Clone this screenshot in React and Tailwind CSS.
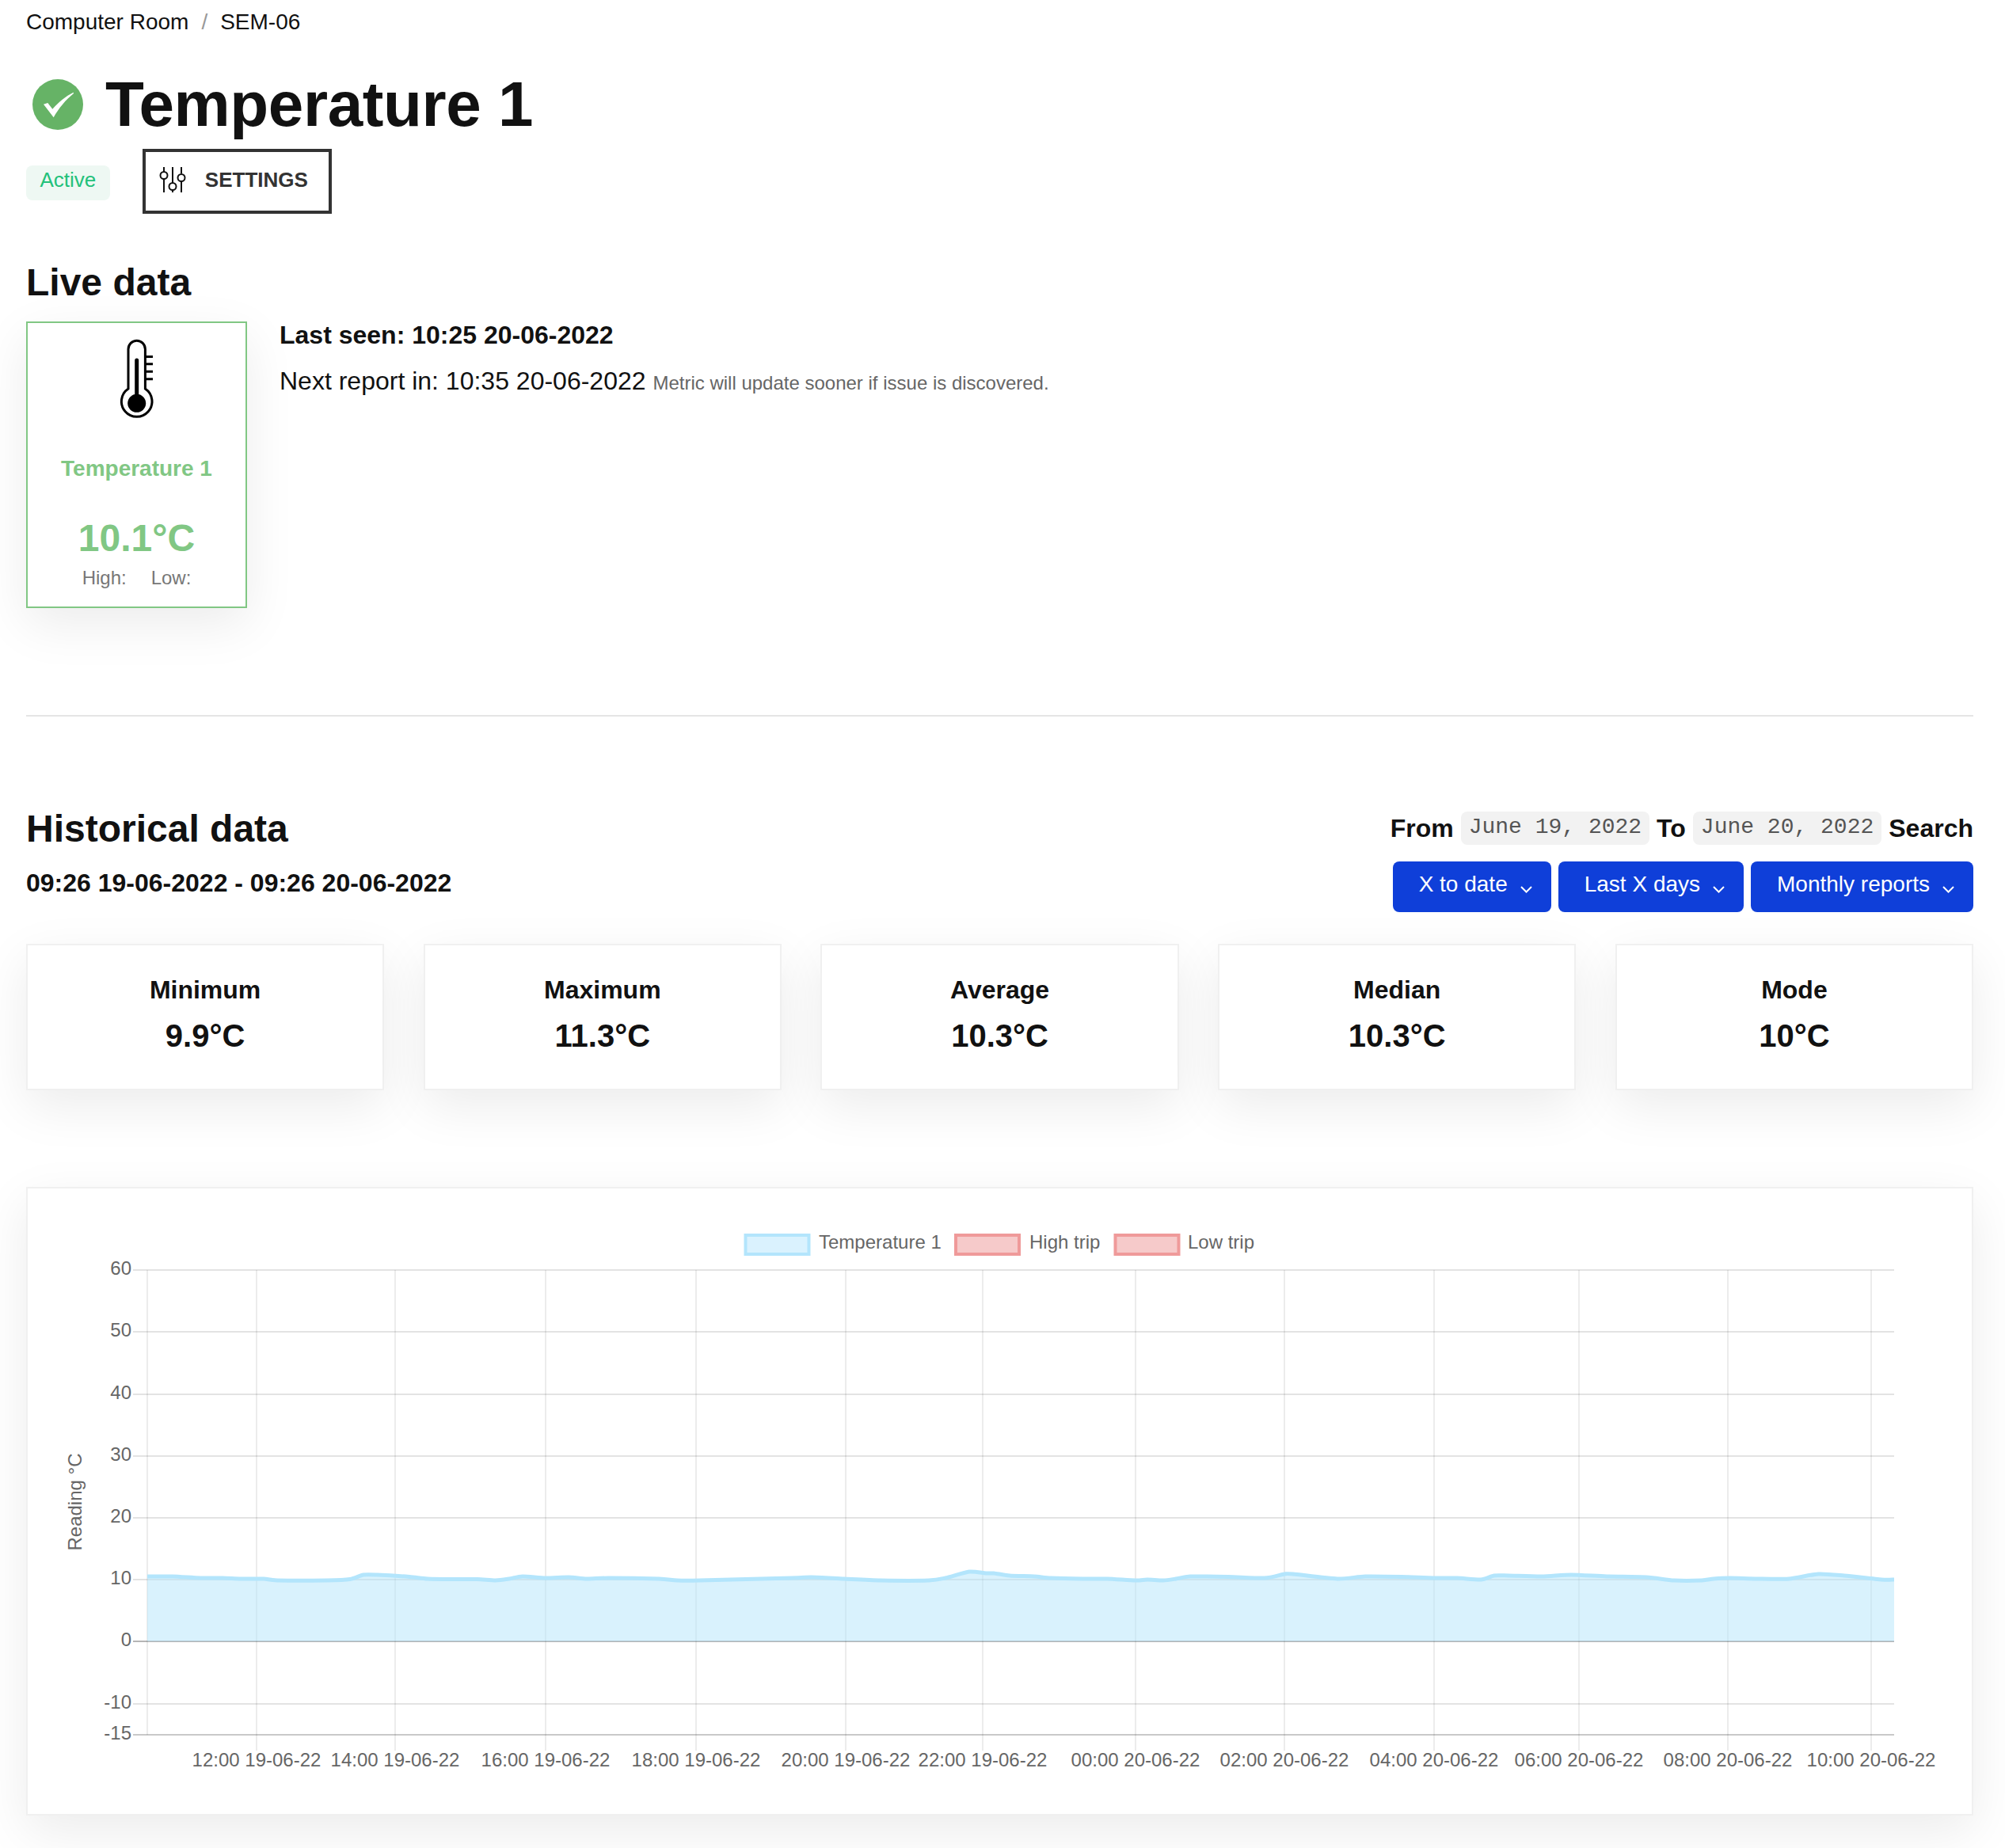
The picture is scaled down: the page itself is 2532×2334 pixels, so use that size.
const yTicks = [
  { label: '60', y: 1605 },
  { label: '50', y: 1683 },
  { label: '40', y: 1762 },
  { label: '30', y: 1840 },
  { label: '20', y: 1918 },
  { label: '10', y: 1996 },
  { label: '0', y: 2074 },
  { label: '-10', y: 2153 },
  { label: '-15', y: 2192 },
];

const xTicks = [
  { label: '12:00 19-06-22', x: 324 },
  { label: '14:00 19-06-22', x: 499 },
  { label: '16:00 19-06-22', x: 689 },
  { label: '18:00 19-06-22', x: 879 },
  { label: '20:00 19-06-22', x: 1068 },
  { label: '22:00 19-06-22', x: 1241 },
  { label: '00:00 20-06-22', x: 1434 },
  { label: '02:00 20-06-22', x: 1622 },
  { label: '04:00 20-06-22', x: 1811 },
  { label: '06:00 20-06-22', x: 1994 },
  { label: '08:00 20-06-22', x: 2182 },
  { label: '10:00 20-06-22', x: 2363 },
];

// traced off the reference, page coordinates
const points = [
  [186, 1992], [218, 1992], [253, 1994], [281, 1994], [304, 1995], [333, 1995], [350, 1997], [413, 1997],
  [442, 1995.5], [459, 1990], [476, 1990], [517, 1992.5], [540, 1995], [574, 1995.5], [603, 1995.5], [626, 1997],
  [643, 1995], [660, 1992], [689, 1994], [718, 1993], [741, 1995], [769, 1994], [832, 1995], [855, 1997],
  [884, 1997], [1000, 1994], [1025, 1993], [1066, 1995], [1112, 1997], [1173, 1997], [1194, 1994], [1224, 1986],
  [1245, 1988], [1255, 1988], [1275, 1991], [1306, 1992], [1327, 1994], [1367, 1995], [1398, 1995], [1434, 1997],
  [1449, 1996], [1469, 1997], [1485, 1995], [1503, 1992], [1551, 1992.5], [1597, 1994], [1622, 1989], [1633, 1989],
  [1689, 1995], [1724, 1992], [1770, 1992.5], [1810, 1994], [1840, 1994], [1870, 1996], [1887, 1991], [1905, 1991],
  [1947, 1992], [1984, 1990], [2029, 1992], [2079, 1993], [2114, 1997], [2149, 1997], [2164, 1995], [2184, 1994],
  [2219, 1995], [2259, 1995], [2296, 1989], [2329, 1991], [2376, 1996], [2392, 1996],
];

function smoothPath(pts) {
  let d = `M${pts[0][0]} ${pts[0][1]}`;
  for (let i = 0; i < pts.length - 1; i++) {
    const p0 = pts[Math.max(0, i - 1)];
    const p1 = pts[i];
    const p2 = pts[i + 1];
    const p3 = pts[Math.min(pts.length - 1, i + 2)];
    const k = 0.12;
    const c1x = p1[0] + (p2[0] - p0[0]) * k;
    const c1y = p1[1] + (p2[1] - p0[1]) * k;
    const c2x = p2[0] - (p3[0] - p1[0]) * k;
    const c2y = p2[1] - (p3[1] - p1[1]) * k;
    d += ` C${c1x} ${c1y} ${c2x} ${c2y} ${p2[0]} ${p2[1]}`;
  }
  return d;
}

function CheckBadge() {
  return (
    <svg viewBox="0 0 64 64" className="w-[64px] h-[64px] shrink-0">
      <circle cx="32" cy="32" r="32" fill="#66b366" />
      <path d="M14 31.7 L19.3 30 L25.3 37.7 C33 29 42 21.5 51.7 16.7 L52 18 C42 26 33 37 26.7 48.3 Z" fill="#fff" />
    </svg>
  );
}

function SettingsIcon() {
  return (
    <svg viewBox="0 0 34 34" className="w-[34px] h-[34px] shrink-0" fill="none" stroke="#111" strokeWidth="2">
      <path d="M6 1v6M6 16v17M17 1v20M17 30v3M28 1v8M28 19v14" />
      <circle cx="6" cy="11.5" r="4.5" />
      <circle cx="17" cy="25.5" r="4.5" />
      <circle cx="28" cy="14.5" r="4.5" />
    </svg>
  );
}

function Thermometer() {
  return (
    <svg viewBox="0 0 66 120" className="w-[66px] h-[120px] shrink-0" fill="none" stroke="#000" strokeWidth="3">
      <path d="M22 70 V20 A10.7 10.7 0 0 1 43.4 20 V70 A19.3 19.3 0 1 1 22 70 Z" />
      <path d="M43.4 29.5H53M43.4 38.8H53M43.4 48.3H53M43.4 57.7H53" />
      <path d="M32.7 34V88" strokeWidth="5" strokeLinecap="round" />
      <circle cx="32.7" cy="88.3" r="11.5" fill="#000" stroke="none" />
    </svg>
  );
}

function Chevron() {
  return (
    <svg viewBox="0 0 15 9" className="w-[15px] h-[9px] mt-[6px] shrink-0" fill="none" stroke="#fff" strokeWidth="2">
      <path d="M1 1l6.5 6.5L14 1" />
    </svg>
  );
}

function DropButton({ label }) {
  return (
    <button className="flex items-center h-[64px] pl-[33px] pr-[24px] gap-[16px] rounded-[8px] bg-[#0f3fd9] text-white text-[28px]">
      <span className="-mt-[6px]">{label}</span>
      <Chevron />
    </button>
  );
}

function DateCode({ children }) {
  return (
    <code className="h-[42px] px-[10px] rounded-[8px] bg-[#f2f2f2] text-[#555] text-[28px] leading-[40px] font-normal font-['Liberation_Mono',monospace]">
      {children}
    </code>
  );
}

function StatCard({ label, value }) {
  return (
    <div className="flex-1 h-[185px] flex flex-col items-center bg-white border-2 border-[#f0f0f0] shadow-[0_20px_60px_rgba(0,0,0,0.08)]">
      <div className="mt-[36px] text-[32px] leading-[40px] font-bold text-[#111]">{label}</div>
      <div className="mt-[13px] text-[40px] leading-[50px] font-bold text-[#111]">{value}</div>
    </div>
  );
}

function Chart() {
  const area = smoothPath(points) + ' L2392 2074 L186 2074 Z';
  return (
    <svg viewBox="35 1502 2454 789" className="block w-[2454px] h-[789px] text-[24px] font-['Liberation_Sans',Arial,sans-serif]">
      {/* grid */}
      {yTicks.map((t) => (
        <line key={t.label} x1="168" x2="2392" y1={t.y} y2={t.y} stroke={t.label === '0' ? '#b5b5b5' : t.label === '-15' ? '#c9c9c9' : '#e3e3e3'} strokeWidth="2" />
      ))}
      <line x1="186" x2="186" y1="1605" y2="2192" stroke="#000" strokeOpacity="0.1" strokeWidth="1.5" />
      {xTicks.map((t) => (
        <line key={t.x} x1={t.x} x2={t.x} y1="1605" y2="2212" stroke="#000" strokeOpacity="0.1" strokeWidth="1.5" />
      ))}

      {/* data */}
      <path d={area} fill="#b3e5fc" fillOpacity="0.5" />
      <path d={smoothPath(points)} fill="none" stroke="#b3e5fc" strokeWidth="5" />

      {/* y axis */}
      {yTicks.map((t) => (
        <text key={t.label} x="166" y={t.y + 6} textAnchor="end" fill="#666">{t.label}</text>
      ))}
      <text x="0" y="0" textAnchor="middle" fill="#666" transform="translate(103 1898) rotate(-90)">Reading °C</text>

      {/* x axis */}
      {xTicks.map((t) => (
        <text key={t.x} x={t.x} y="2232" textAnchor="middle" fill="#666">{t.label}</text>
      ))}

      {/* legend */}
      <rect x="941.5" y="1561" width="80" height="24" fill="#daf2fe" stroke="#b3e5fc" strokeWidth="4" />
      <text x="1034" y="1578" fill="#666">Temperature 1</text>
      <rect x="1207" y="1561" width="80" height="24" fill="#f6caca" stroke="#ef9a9a" strokeWidth="4" />
      <text x="1300" y="1578" fill="#666">High trip</text>
      <rect x="1408.5" y="1561" width="80" height="24" fill="#f6caca" stroke="#ef9a9a" strokeWidth="4" />
      <text x="1500" y="1578" fill="#666">Low trip</text>
    </svg>
  );
}

export default function App() {
  return (
    <div className="min-h-[2334px] bg-white pl-[33px] pr-[40px] text-[#111] font-['Liberation_Sans',Arial,sans-serif]">
      {/* breadcrumb */}
      <nav className="flex items-center pt-[8px] h-[48px] text-[28px] leading-[40px]">
        <span>Computer Room</span>
        <span className="mx-[16px] text-[#999]">/</span>
        <span>SEM-06</span>
      </nav>

      {/* title */}
      <div className="flex items-center mt-[36px] h-[96px] pl-[8px] gap-[28px]">
        <CheckBadge />
        <h1 className="text-[80px] leading-[96px] font-bold tracking-[-0.4px]">Temperature 1</h1>
      </div>

      <div className="flex items-center mt-[8px] h-[82px]">
        <span className="mt-[4px] h-[44px] px-[17.5px] rounded-[8px] bg-[#eef8f3] text-[#22c17a] text-[26px] leading-[36px]">Active</span>
        <button className="ml-[41px] flex items-center w-[239px] h-[82px] pl-[17px] pb-[4px] gap-[24px] border-4 border-[#333] text-[#333] text-[26px] font-bold">
          <SettingsIcon />
          <span>SETTINGS</span>
        </button>
      </div>

      {/* live data */}
      <h2 className="mt-[58px] text-[48px] leading-[58px] font-bold">Live data</h2>
      <div className="flex mt-[20px]">
        <div className="w-[279px] h-[362px] flex flex-col items-center pt-[13px] bg-white border-2 border-[#81c784] shadow-[0_20px_60px_rgba(0,0,0,0.08)]">
          <Thermometer />
          <div className="mt-[31px] text-[28px] leading-[40px] font-bold text-[#81c784]">Temperature 1</div>
          <div className="mt-[38px] text-[48px] leading-[60px] font-bold text-[#81c784]">10.1°C</div>
          <div className="mt-[5px] flex gap-[31px] text-[24px] leading-[30px] text-[#777]">
            <span>High:</span>
            <span>Low:</span>
          </div>
        </div>
        <div className="ml-[41px]">
          <div className="mt-[-3px] text-[32px] leading-[40px] font-bold">Last seen: 10:25 20-06-2022</div>
          <div className="mt-[18px] text-[32px] leading-[40px]">
            Next report in: 10:35 20-06-2022 <span className="text-[24px] text-[#666]">Metric will update sooner if issue is discovered.</span>
          </div>
        </div>
      </div>

      <div className="mt-[135px] h-[2px] bg-[#e5e5e5]" />

      {/* historical data */}
      <div className="flex justify-between mt-[111px]">
        <div>
          <h2 className="mt-[2px] text-[48px] leading-[58px] font-bold">Historical data</h2>
          <div className="mt-[19px] text-[32px] leading-[40px] font-bold">09:26 19-06-2022 - 09:26 20-06-2022</div>
        </div>
        <div className="flex flex-col items-end mt-[9px]">
          <div className="flex items-center gap-[9px] text-[32px] leading-[42px] font-bold">
            <span>From</span>
            <DateCode>June 19, 2022</DateCode>
            <span>To</span>
            <DateCode>June 20, 2022</DateCode>
            <span>Search</span>
          </div>
          <div className="flex mt-[21px] gap-[9px]">
            <DropButton label="X to date" />
            <DropButton label="Last X days" />
            <DropButton label="Monthly reports" />
          </div>
        </div>
      </div>

      <div className="flex gap-[49.5px] mt-[40px]">
        <StatCard label="Minimum" value="9.9°C" />
        <StatCard label="Maximum" value="11.3°C" />
        <StatCard label="Average" value="10.3°C" />
        <StatCard label="Median" value="10.3°C" />
        <StatCard label="Mode" value="10°C" />
      </div>

      <div className="mt-[122px] h-[794px] bg-white border-2 border-[#f0f0f0] shadow-[0_20px_60px_rgba(0,0,0,0.08)]">
        <Chart />
      </div>
    </div>
  );
}
